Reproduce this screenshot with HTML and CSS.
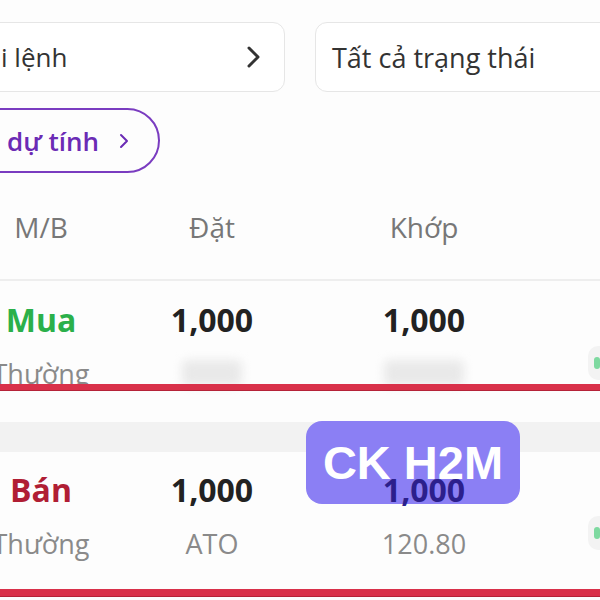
FILE: index.html
```html
<!DOCTYPE html>
<html>
<head>
    <title>Sổ lệnh</title>
    <link rel="stylesheet" href="styles.css">
</head>
<body>
    <div class="screen">
        <div class="filters">
            <div class="select select-type">
                <span>i lệnh</span>
                <svg width="18" height="24" viewBox="0 0 18 24"><path d="M5 3 L14 12 L5 21" fill="none" stroke="#333" stroke-width="3" stroke-linecap="round" stroke-linejoin="round"/></svg>
            </div>
            <div class="select select-status">
                <span>Tất cả trạng thái</span>
            </div>
        </div>

        <div class="pill">
            <span>dự tính</span>
            <svg width="10" height="16" viewBox="0 0 10 16"><path d="M2 2 L8 8 L2 14" fill="none" stroke="#6b2bb5" stroke-width="2" stroke-linecap="round" stroke-linejoin="round"/></svg>
        </div>

        <div class="grid table-head">
            <div>M/B</div>
            <div>Đặt</div>
            <div>Khớp</div>
            <div></div>
        </div>

        <div class="grid order order-first">
            <div class="cell">
                <span class="main buy">Mua</span>
                <span class="sub">Thường</span>
            </div>
            <div class="cell">
                <span class="main">1,000</span>
                <span class="sub"><span class="blurred blurred-short"></span></span>
            </div>
            <div class="cell">
                <span class="main">1,000</span>
                <span class="sub"><span class="blurred blurred-long"></span></span>
            </div>
            <div class="cell edge">
                <span class="edge-btn"><i></i></span>
            </div>
        </div>

        <div class="band"></div>

        <div class="grid order order-second">
            <div class="cell">
                <span class="main sell">Bán</span>
                <span class="sub">Thường</span>
            </div>
            <div class="cell">
                <span class="main">1,000</span>
                <span class="sub">ATO</span>
            </div>
            <div class="cell">
                <span class="main under-badge">1,000</span>
                <span class="sub">120.80</span>
            </div>
            <div class="cell edge">
                <span class="edge-btn"><i></i></span>
            </div>
        </div>

        <!-- red marks and label drawn over the screenshot -->
        <div class="mark mark-top"></div>
        <div class="mark mark-bottom"></div>
        <div class="badge">CK H2M</div>
    </div>
</body>
</html>
```

FILE: styles.css
```css
body {
    margin: 0;
    background: #fff;
    font-family: "Open Sans", "Noto Sans", sans-serif;
}

.screen {
    position: relative;
    width: 600px;
    height: 600px;
    overflow: hidden;
    background: #fdfdfd;
}

.filters {
    display: flex;
    gap: 30px;
    padding-top: 22px;
    margin-left: -20px;
}

.select {
    display: flex;
    align-items: center;
    justify-content: space-between;
    box-sizing: border-box;
    height: 70px;
    border: 1.5px solid #e6e6e6;
    border-radius: 12px;
    background: #fff;
    font-size: 26px;
    color: #333;
}

.select-type {
    flex: 0 0 305px;
    padding: 0 22px 0 20px;
}

.select-status {
    flex: 0 0 300px;
    padding-left: 16px;
    font-size: 27px;
}

.pill {
    display: flex;
    align-items: center;
    gap: 20px;
    box-sizing: border-box;
    width: 200px;
    height: 65px;
    margin-top: 16px;
    margin-left: -40px;
    padding-left: 45px;
    border: 2.5px solid #7a3cc0;
    border-radius: 33px;
    font-size: 26px;
    font-weight: 600;
    color: #6b2bb5;
}

.grid {
    display: grid;
    grid-template-columns: 200px 142px 282px 60px;
    margin-left: -59px;
    text-align: center;
}

.table-head {
    padding: 36px 0 34px;
    font-size: 28px;
    line-height: 36px;
    color: #777;
    border-bottom: 2px solid #eeeeee;
}

.order {
    padding: 17px 0 28px;
}

.order-second {
    padding-top: 16px;
}

.cell {
    display: flex;
    flex-direction: column;
    align-items: center;
}

.main {
    font-size: 32px;
    line-height: 44px;
    font-weight: 700;
    color: #222;
}

.buy {
    color: #2bb04a;
}

.sell {
    color: #b01e34;
}

.sub {
    margin-top: 14px;
    font-size: 27px;
    line-height: 36px;
    color: #8a8a8a;
    white-space: nowrap;
}

.blurred {
    display: inline-block;
    height: 26px;
    margin-top: 4px;
    background: #e9e9e9;
    border-radius: 6px;
    filter: blur(5px);
}

.blurred-short {
    width: 60px;
}

.blurred-long {
    width: 80px;
}

.edge {
    align-items: flex-start;
}

.edge-btn {
    display: flex;
    align-items: center;
    justify-content: flex-end;
    width: 40px;
    height: 34px;
    margin-top: 48px;
    margin-left: 23px;
    border-radius: 10px;
    background: #f3f3f3;
}

.edge-btn i {
    width: 6px;
    height: 12px;
    margin-right: 28px;
    border-radius: 3px;
    background: #7ed9a0;
}

.band {
    height: 30px;
    background: #f2f2f2;
}

.under-badge {
    position: relative;
    z-index: 2;
    color: #2c1f8c;
}

.mark {
    position: absolute;
    left: 0;
    right: 0;
    background: #d9314a;
    border-bottom: 1px solid #b52338;
}

.mark-top {
    top: 384px;
    height: 6px;
}

.mark-bottom {
    top: 589px;
    height: 7px;
}

.badge {
    position: absolute;
    z-index: 1;
    left: 306px;
    top: 421px;
    width: 214px;
    height: 83px;
    display: flex;
    align-items: center;
    justify-content: center;
    border-radius: 16px;
    background: #8b7ff4;
    font-family: "Liberation Sans", Arial, sans-serif;
    font-size: 47px;
    font-weight: 700;
    color: #fff;
}
```
